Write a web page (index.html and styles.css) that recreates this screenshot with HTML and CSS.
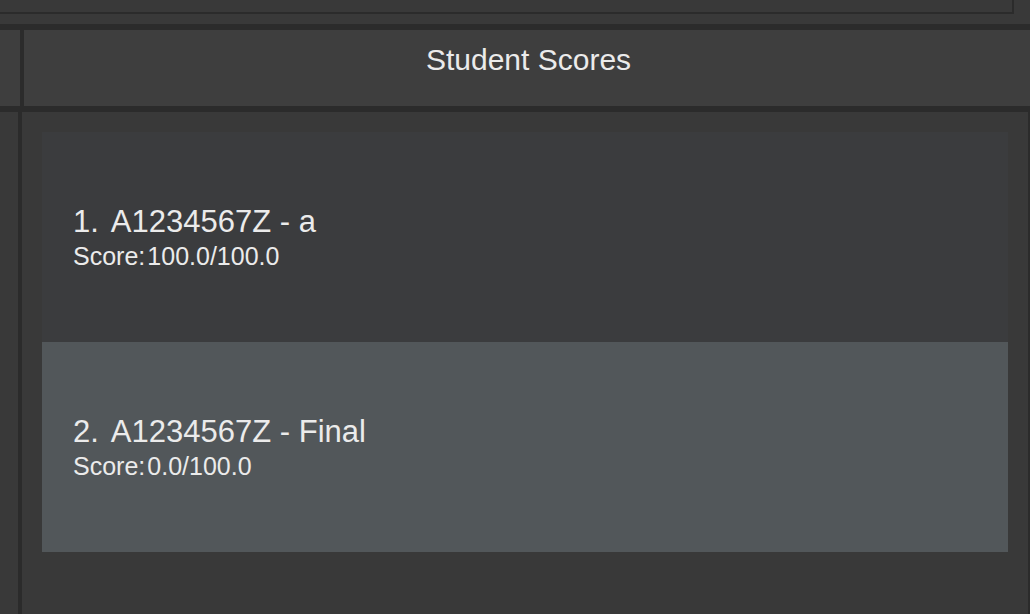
FILE: index.html
```html
<!DOCTYPE html>
<html lang="en">
<head>
<meta charset="utf-8">
<title>Student Scores</title>
<link rel="stylesheet" href="styles.css">
</head>
<body>
  <div class="top-panel">
    <div class="top-box"></div>
  </div>
  <div class="header-row">
    <div class="side"></div>
    <div class="divider"></div>
    <div class="title">Student Scores</div>
  </div>
  <div class="content-row">
    <div class="side side-content"></div>
    <div class="divider"></div>
    <div class="list">
      <div class="card">
        <div class="card-title"><span class="index">1.</span>A1234567Z - a</div>
        <div class="card-score">Score:&#8202;100.0/100.0</div>
      </div>
      <div class="card card-selected">
        <div class="card-title"><span class="index">2.</span>A1234567Z - Final</div>
        <div class="card-score">Score:&#8202;0.0/100.0</div>
      </div>
    </div>
  </div>
</body>
</html>
```

FILE: styles.css
```css
html, body {
  margin: 0;
  padding: 0;
  height: 100%;
}

body {
  background: #393939;
  font-family: "Liberation Sans", Arial, sans-serif;
  color: #ebebeb;
  display: flex;
  flex-direction: column;
  overflow: hidden;
}

.top-panel {
  height: 24px;
  padding-right: 16px;
  border-bottom: 6px solid #2b2b2b;
  box-sizing: content-box;
}

.top-box {
  height: 12px;
  border-right: 2px solid #2b2b2b;
  border-bottom: 2px solid #2b2b2b;
}

.header-row {
  display: flex;
  height: 76px;
  background: #3e3e3e;
  border-bottom: 6px solid #2b2b2b;
}

.side {
  width: 20px;
}

.divider {
  width: 4px;
  background: #2b2b2b;
}

.title {
  flex: 1;
  text-align: center;
  font-size: 30px;
  line-height: 34px;
  padding-top: 13px;
  padding-left: 3px;
}

.content-row {
  flex: 1;
  display: flex;
  background: #393939;
}

.side-content {
  width: 18px;
}

.list {
  flex: 1;
  padding: 20px 20px 0 20px;
  border-right: 2px solid #2b2b2b;
  display: flex;
  flex-direction: column;
}

.card {
  height: 210px;
  background: #3b3c3e;
  padding-left: 31px;
  display: flex;
  flex-direction: column;
  justify-content: center;
}

.card-selected {
  background: #52575a;
}

.card-title {
  font-size: 31px;
  line-height: 36px;
}

.index {
  margin-right: 12px;
}

.card-score {
  font-size: 25px;
  line-height: 28px;
  margin-top: 2px;
}
```
